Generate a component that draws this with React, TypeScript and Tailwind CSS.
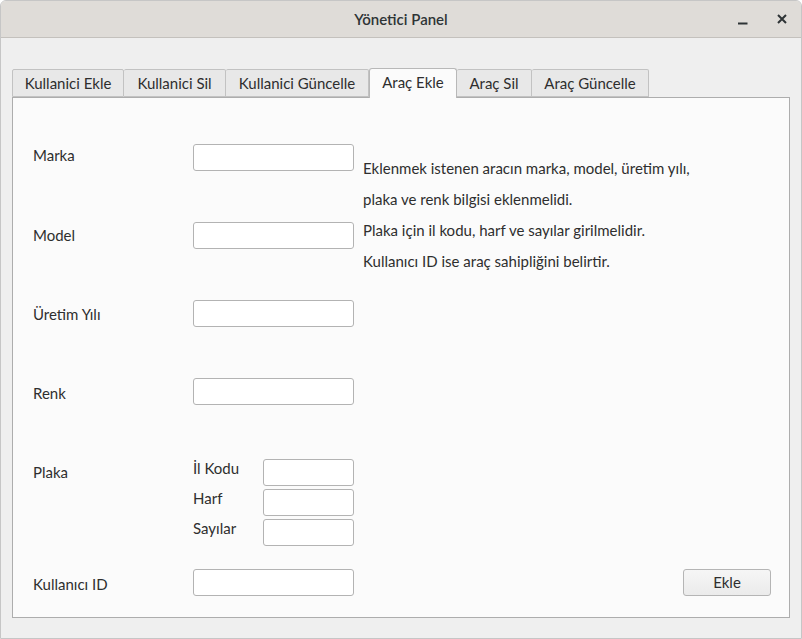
import React from "react";

const tabs = [
  { label: "Kullanici Ekle", w: "w-[112px]" },
  { label: "Kullanici Sil", w: "w-[102px]" },
  { label: "Kullanici Güncelle", w: "w-[143px]" },
  { label: "Araç Ekle", w: "w-[88px]", active: true },
  { label: "Araç Sil", w: "w-[75px]" },
  { label: "Araç Güncelle", w: "w-[117px]" },
];

const info = [
  "Eklenmek istenen aracın marka, model, üretim yılı,",
  "plaka ve renk bilgisi eklenmelidi.",
  "Plaka için il kodu, harf ve sayılar girilmelidir.",
  "Kullanıcı ID ise araç sahipliğini belirtir.",
];

function Field({ wide = true }: { wide?: boolean }) {
  return (
    <input
      className={`${wide ? "w-[161px]" : "w-[91px]"} h-[27px] shrink-0 rounded-[3px] border border-[#b3b3b3] bg-white px-1 text-sm outline-none`}
    />
  );
}

function Row({ label, mb, shift }: { label: string; mb: string; shift: string }) {
  return (
    <div className={`flex items-center ${mb}`}>
      <span className={`w-[160px] ${shift}`}>{label}</span>
      <Field />
    </div>
  );
}

export default function App() {
  return (
    <div
      className="w-[802px] h-[639px] flex flex-col overflow-hidden rounded-t-[6px] border border-[#c6c6c6] bg-[#efefef] text-[15px] text-[#2e2e2e]"
      style={{ fontFamily: "Lato, 'Noto Sans', sans-serif" }}
    >
      {/* title bar */}
      <div className="h-[37px] shrink-0 flex items-center border-b border-[#c4c1bd] bg-[#dfdcd8] px-3">
        <div className="w-[60px]" />
        <div className="flex-1 text-center font-semibold text-[15px] text-[#2e3436]">Yönetici Panel</div>
        <div className="w-[60px] flex items-center justify-end gap-[29px] pr-[2px]">
          <svg width="10" height="12" viewBox="0 0 10 12">
            <path d="M0 10.5 H9.5" stroke="#2e3436" strokeWidth="2" />
          </svg>
          <svg width="10" height="10" viewBox="0 0 10 10">
            <path d="M1 1 L9 9 M9 1 L1 9" stroke="#2e3436" strokeWidth="2" />
          </svg>
        </div>
      </div>

      {/* body */}
      <div className="flex-1 flex flex-col px-[11px] pt-[30px] pb-[20px]">
        {/* tabs */}
        <div className="flex items-end h-[29px]">
          {tabs.map((t) =>
            t.active ? (
              <div
                key={t.label}
                className={`${t.w} h-[30px] -mb-px relative z-10 flex items-center justify-center rounded-t-[3px] border border-b-0 border-[#b8b8b8] bg-[#fbfbfb] pb-[2px]`}
              >
                {t.label}
              </div>
            ) : (
              <div
                key={t.label}
                className={`${t.w} h-[28px] flex items-center justify-center rounded-t-[2px] border border-l-0 first:border-l border-[#c2c2c2] bg-[#e8e8e8]`}
              >
                {t.label}
              </div>
            )
          )}
        </div>

        {/* panel */}
        <div className="flex-1 flex flex-col border border-[#adadad] bg-[#fbfbfb] pl-[20px] pr-[18px] pt-[46px]">
          <div className="flex">
            <div className="flex flex-col">
              <Row label="Marka" mb="mb-[51px]" shift="-mt-[5px]" />
              <Row label="Model" mb="mb-[51px]" shift="-mt-[1px]" />
              <Row label="Üretim Yılı" mb="mb-[51px]" shift="mt-[1px]" />
              <Row label="Renk" mb="mb-[54px]" shift="mt-[3px]" />
              <div className="flex items-start">
                <span className="w-[160px] leading-[27px]">Plaka</span>
                <div className="flex flex-col gap-[3px]">
                  {["İl Kodu", "Harf", "Sayılar"].map((s) => (
                    <div key={s} className="flex items-start">
                      <span className="w-[70px] leading-[20px] -mt-[1px]">{s}</span>
                      <Field wide={false} />
                    </div>
                  ))}
                </div>
              </div>
            </div>
            <div className="ml-[9px] mt-[9px] flex flex-col leading-[31px]">
              {info.map((l) => (
                <span key={l}>{l}</span>
              ))}
            </div>
          </div>

          <div className="flex items-center mt-[23px]">
            <span className="w-[160px] mt-[4px]">Kullanıcı ID</span>
            <Field />
            <button className="ml-auto w-[88px] h-[27px] rounded-[3px] border border-[#b5b5b5] bg-gradient-to-b from-[#f6f6f6] to-[#ebebeb] text-[15px] text-[#2e2e2e]">
              Ekle
            </button>
          </div>
        </div>
      </div>
    </div>
  );
}
